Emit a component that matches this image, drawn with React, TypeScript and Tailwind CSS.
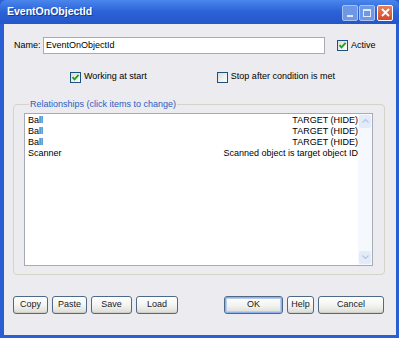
import React from 'react';

const rows = [
    { name: 'Ball', value: 'TARGET (HIDE)' },
    { name: 'Ball', value: 'TARGET (HIDE)' },
    { name: 'Ball', value: 'TARGET (HIDE)' },
    { name: 'Scanner', value: 'Scanned object is target object ID' },
];

function CheckBox({ checked }: { checked: boolean }) {
    return (
        <span className="flex h-[11px] w-[11px] shrink-0 items-center justify-center border border-[#1c5180] bg-gradient-to-br from-[#dcdcd7] to-white">
            {checked ? (
                <svg width="9" height="9" viewBox="0 0 9 9" aria-hidden="true">
                    <path d="M1.5 4.2 L3.5 6.4 L7.6 1.8" stroke="#21a121" strokeWidth="1.8" fill="none" />
                </svg>
            ) : null}
        </span>
    );
}

function Button({ label, width, primary }: { label: string; width: string; primary?: boolean }) {
    return (
        <button
            className={
                'flex h-[18px] items-center justify-center rounded-[3px] border border-[#4e6a86] bg-gradient-to-b from-white via-[#f4f4f1] to-[#dcdcd6] text-[9px] text-[#1a1a1a] ' +
                width +
                (primary ? ' shadow-[inset_0_0_0_1px_#8fb0ea,inset_0_0_0_2px_#b8cdf2]' : ' shadow-[inset_0_-1px_0_#cfcfc8]')
            }
        >
            {label}
        </button>
    );
}

export default function App() {
    return (
        <div
            className="flex h-[338px] w-[399px] flex-col bg-[#2a5fd3] text-black"
            style={{ fontFamily: '"Liberation Sans", Arial, sans-serif' }}
        >
            {/* title bar */}
            <div className="flex h-[24px] shrink-0 items-center justify-between rounded-t-[6px] bg-gradient-to-b from-[#4a86ec] via-[#2b62d8] to-[#2456c8] pl-[7px] pr-[6px]">
                <span className="text-[10.5px] font-bold text-white [text-shadow:1px_1px_0_#163a8c]">EventOnObjectId</span>
                <div className="flex gap-[1px] pt-[1px]">
                    <span className="flex h-[16px] w-[16px] items-end justify-center rounded-[2px] border border-[#a8c2f0] bg-[#6f98e4] pb-[3px]">
                        <span className="h-[2px] w-[6px] bg-[#dfe9fb]" />
                    </span>
                    <span className="flex h-[16px] w-[16px] items-center justify-center rounded-[2px] border border-[#a8c2f0] bg-[#6f98e4]">
                        <span className="h-[8px] w-[8px] border border-t-2 border-[#dfe9fb]" />
                    </span>
                    <span className="ml-[1px] flex h-[16px] w-[16px] items-center justify-center rounded-[2px] border border-white bg-gradient-to-b from-[#e8805a] to-[#d4462a]">
                        <svg width="9" height="9" viewBox="0 0 9 9" aria-hidden="true">
                            <path d="M1 1 L8 8 M8 1 L1 8" stroke="white" strokeWidth="1.8" />
                        </svg>
                    </span>
                </div>
            </div>

            {/* body */}
            <div className="mb-[3px] ml-[4px] mr-[3px] flex flex-1 flex-col bg-[#ecebef] text-[9px]">
                {/* name row */}
                <div className="mt-[13px] flex h-[17px] items-center">
                    <span className="ml-[10px] w-[29px]">Name:</span>
                    <div className="flex h-[17px] w-[282px] items-center border border-[#a5acb5] bg-white pl-[2px]">
                        EventOnObjectId
                    </div>
                    <div className="ml-[12px] flex items-center gap-[3px]">
                        <CheckBox checked />
                        <span>Active</span>
                    </div>
                </div>

                {/* options row */}
                <div className="mt-[17px] flex h-[12px] items-center">
                    <div className="ml-[66px] flex items-center gap-[3px]">
                        <CheckBox checked />
                        <span>Working at start</span>
                    </div>
                    <div className="ml-[70px] flex items-center gap-[3px]">
                        <CheckBox checked={false} />
                        <span>Stop after condition is met</span>
                    </div>
                </div>

                {/* relationships group */}
                <fieldset className="ml-[9px] mt-[15px] w-[372px] rounded-[4px] border border-[#d6d3c8] pb-[8px] pl-[10px] pr-[11px] pt-[1px]">
                    <legend className="ml-[5px] px-[1px] text-[9px] text-[#2c5dbf]">Relationships (click items to change)</legend>
                    <div className="flex h-[153px] border border-[#a5acb5] bg-white">
                        <div className="flex flex-1 flex-col pl-[3px] pt-[1px] leading-[11px]">
                            {rows.map((r, i) => (
                                <div key={i} className="flex justify-between">
                                    <span>{r.name}</span>
                                    <span>{r.value}</span>
                                </div>
                            ))}
                        </div>
                        <div className="flex w-[14px] flex-col justify-between bg-[#f5f8fd] p-[1px]">
                            <span className="flex h-[13px] items-center justify-center rounded-[2px] bg-[#e3ebf8]">
                                <svg width="7" height="4" viewBox="0 0 7 4" aria-hidden="true">
                                    <path d="M0.5 3.5 L3.5 0.5 L6.5 3.5" stroke="#b5c6e4" strokeWidth="1.2" fill="none" />
                                </svg>
                            </span>
                            <span className="flex h-[13px] items-center justify-center rounded-[2px] bg-[#e3ebf8]">
                                <svg width="7" height="4" viewBox="0 0 7 4" aria-hidden="true">
                                    <path d="M0.5 0.5 L3.5 3.5 L6.5 0.5" stroke="#b5c6e4" strokeWidth="1.2" fill="none" />
                                </svg>
                            </span>
                        </div>
                    </div>
                </fieldset>

                {/* buttons */}
                <div className="ml-[9px] mt-[21px] flex">
                    <div className="flex gap-[4px]">
                        <Button label="Copy" width="w-[35px]" />
                        <Button label="Paste" width="w-[35px]" />
                        <Button label="Save" width="w-[41px]" />
                        <Button label="Load" width="w-[42px]" />
                    </div>
                    <div className="ml-[46px] flex gap-[4px]">
                        <Button label="OK" width="w-[59px]" primary />
                        <Button label="Help" width="w-[27px]" />
                        <Button label="Cancel" width="w-[66px]" />
                    </div>
                </div>
            </div>
        </div>
    );
}
